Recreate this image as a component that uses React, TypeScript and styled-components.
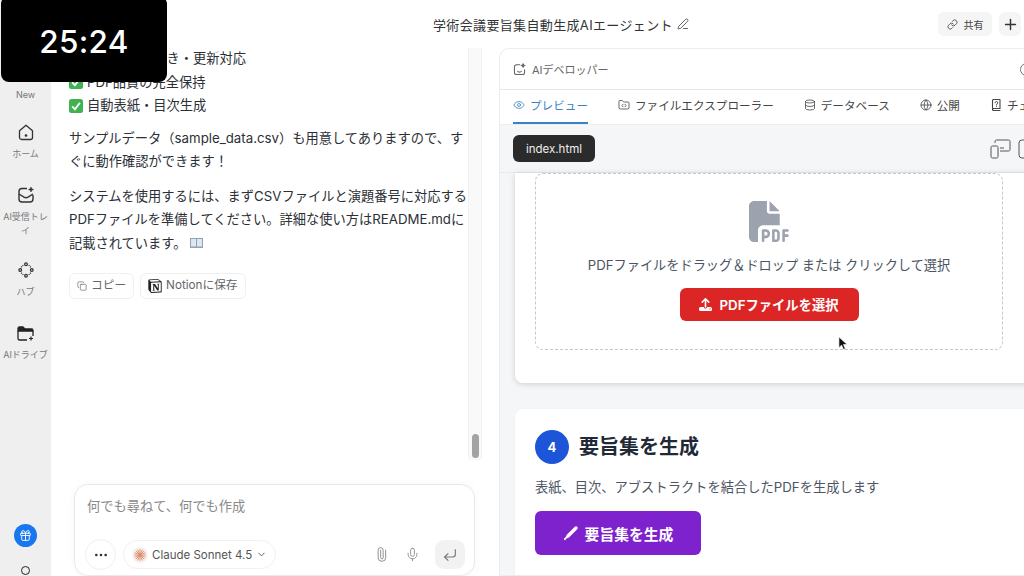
import React from 'react';
import styled, { createGlobalStyle } from 'styled-components';
import {
  ChevronDown,
  Copy,
  CornerDownLeft,
  Database,
  Ellipsis,
  Eye,
  FolderCode,
  Gift,
  Globe,
  Link,
  Mic,
  Paperclip,
  PenLine,
  Plus,
} from 'lucide-react';
import { FaFilePdf, FaUpload } from 'react-icons/fa6';
import { SiNotion } from 'react-icons/si';

const GlobalStyle = createGlobalStyle`
  html, body {
    margin: 0;
    padding: 0;
    background: #fff;
    overflow: hidden;
  }
  * {
    box-sizing: border-box;
  }
  body {
    font-family: Inter, "Noto Sans CJK JP", sans-serif;
    color: #2b2f36;
  }
`;

const HomeIcon = () => (
  <svg width="16" height="17" viewBox="0 0 16 17" fill="none" stroke="#333" strokeWidth="1.3" strokeLinejoin="round">
    <path d="M1.500 6.800 8 1.200l6.500 5.600v6.700a2 2 0 0 1-2 2h-9a2 2 0 0 1-2-2z" />
    <circle cx="8" cy="11.500" r="0.700" fill="#333" />
  </svg>
);

const InboxIcon = () => (
  <svg width="18" height="18" viewBox="0 0 18 18" fill="none" stroke="#333" strokeWidth="1.4" strokeLinejoin="round">
    <path d="M10 2.500H5a3 3 0 0 0-3 3V13a3 3 0 0 0 3 3h8a3 3 0 0 0 3-3V9" />
    <path d="M2 8l5 3.200a4 4 0 0 0 4 0L16 8" />
    <path d="M14 1l.7 1.800 1.800.7-1.800.7L14 6l-.7-1.800-1.800-.7 1.800-.7z" fill="#333" strokeWidth="0.600" />
  </svg>
);

const HubIcon = () => (
  <svg width="18" height="18" viewBox="-1 -1 20 20" fill="none" stroke="#333" strokeWidth="1.400">
    <circle cx="9" cy="2.600" r="1.500" />
    <circle cx="15.400" cy="9" r="1.500" />
    <circle cx="9" cy="15.400" r="1.500" />
    <circle cx="2.600" cy="9" r="1.500" />
    <path d="M12 3.600 14.400 6M14.400 12 12 14.400M6 14.400 3.600 12M3.600 6 6 3.600" strokeDasharray="1.200 1" />
  </svg>
);

const DriveIcon = () => (
  <svg width="17" height="16" viewBox="0 0 17 16" fill="none" stroke="#222" strokeWidth="1.300" strokeLinejoin="round">
    <path d="M1 4V2.500A1.500 1.500 0 0 1 2.500 1H6l2 2h6.500A1.500 1.500 0 0 1 16 4.500V5H1z" fill="#222" />
    <path d="M1 5v7.500A1.500 1.500 0 0 0 2.500 14H10M16 5v5" />
    <path d="M14 10.500v4M12 12.500h4" strokeWidth="1.200" />
  </svg>
);

const SparkleBoxIcon = () => (
  <svg width="13" height="13" viewBox="0 0 18 18" fill="none" stroke="#666" strokeWidth="1.500" strokeLinejoin="round">
    <path d="M10 2.500H5a3 3 0 0 0-3 3V13a3 3 0 0 0 3 3h8a3 3 0 0 0 3-3V9" />
    <path d="M6 11c.8 1.200 1.800 1.600 3 1.600s2.200-.4 3-1.600" />
    <path d="M14 1l.7 1.800 1.800.7-1.800.7L14 6l-.7-1.800-1.800-.7 1.800-.7z" />
  </svg>
);

const QuizIcon = () => (
  <svg width="12" height="12" viewBox="0 0 12 12" fill="none" stroke="#444" strokeWidth="1.100" strokeLinecap="round">
    <path d="M2.500 9.500V1.500a1 1 0 0 1 1-1h6a.5.5 0 0 1 .5.5v8.500h-6.500a1 1 0 0 0 0 2H10" />
    <path d="M5 3.800a1.400 1.400 0 1 1 1.500 1.500v.8M6.500 7.400v.1" strokeWidth="0.900" />
  </svg>
);

const DevicesIcon = () => (
  <svg width="21" height="20" viewBox="0 0 21 20" fill="none" stroke="#555" strokeWidth="1">
    <rect x="1" y="7" width="7" height="12" rx="1.500" />
    <path d="M5 4V2.500A1.500 1.500 0 0 1 6.500 1h12A1.500 1.500 0 0 1 20 2.500v8a1.500 1.500 0 0 1-1.500 1.500H10M10 9h4" />
  </svg>
);

const TabletIcon = () => (
  <svg width="16" height="20" viewBox="0 0 16 20" fill="none" stroke="#555" strokeWidth="1">
    <rect x="1" y="1" width="14" height="18" rx="3" />
  </svg>
);

const ClaudeMark = () => (
  <svg width="16" height="16" viewBox="0 0 16 16" stroke="#dc8a6b" strokeWidth="0.900" strokeLinecap="round">
    <circle cx="8" cy="8" r="8" fill="#f8f0ec" stroke="none" />
    <path d="M8 2.500v11M2.500 8h11M4.100 4.100l7.800 7.800M11.900 4.100l-7.800 7.800M5.800 3l4.400 10M10.200 3 5.800 13M3 5.800l10 4.400M13 5.800 3 10.200" />
  </svg>
);

const StickPen = () => (
  <svg width="16" height="16" viewBox="0 0 16 16" fill="none" stroke="#fff" strokeLinecap="round">
    <path d="M5 11 13 3" strokeWidth="3.400" />
    <path d="M1.800 14.200 4 12" strokeWidth="1.800" />
  </svg>
);

const CheckEmoji = () => (
  <CheckBox viewBox="0 0 14 14">
    <rect width="14" height="14" rx="2.500" fill="#3fb34f" />
    <path d="M3.200 7.400 5.900 10.300 10.900 3.700" fill="none" stroke="#fff" strokeWidth="1.900" />
  </CheckBox>
);

const BookEmoji = () => (
  <svg width="13" height="10" viewBox="0 0 13 10">
    <rect width="13" height="10" fill="#8ea3b8" />
    <rect x="1" y="1" width="5" height="7.500" fill="#dfe6ec" />
    <rect x="7" y="1" width="5" height="7.500" fill="#dfe6ec" />
  </svg>
);

const SideItem: React.FC<{ icon: React.ReactNode; label: React.ReactNode; gap?: number }> = ({ icon, label, gap }) => (
  <SideEntry $gap={gap}>
    {icon}
    <SideLabel>{label}</SideLabel>
  </SideEntry>
);

const Tab: React.FC<{ icon: React.ReactNode; label: string; active?: boolean }> = ({ icon, label, active }) => (
  <TabItem $active={active}>
    {icon}
    {label}
  </TabItem>
);

export default function App() {
  return (
    <Root>
      <GlobalStyle />
      <Sidebar>
        <SideItem icon={<Plus size={18} color="#333" />} label="New" />
        <SideItem icon={<HomeIcon />} label="ホーム" gap={22} />
        <SideItem icon={<InboxIcon />} label="AI受信トレイ" gap={25} />
        <SideItem icon={<HubIcon />} label="ハブ" gap={23} />
        <SideItem icon={<DriveIcon />} label="AIドライブ" gap={27} />
        <SideFoot>
          <GiftBadge>
            <Gift size={13} color="#fff" strokeWidth={1.700} />
          </GiftBadge>
          <FootDot />
        </SideFoot>
      </Sidebar>
      <Main>
        <Header>
          <Title>
            学術会議要旨集自動生成AIエージェント
            <PenLine size={12} strokeWidth={1.500} />
          </Title>
          <HeaderActions>
            <ShareButton>
              <Link size={11} strokeWidth={1.800} />
              共有
            </ShareButton>
            <PlusButton>
              <Plus size={17} strokeWidth={2} />
            </PlusButton>
          </HeaderActions>
        </Header>
        <Body>
          <ChatColumn>
            <ChatTop>
              <Messages>
                <ListLine>
                  <CheckEmoji />
                  ファイル上書き・更新対応
                </ListLine>
                <ListLine>
                  <CheckEmoji />
                  PDF品質の完全保持
                </ListLine>
                <ListLine>
                  <CheckEmoji />
                  自動表紙・目次生成
                </ListLine>
                <Paragraph>
                  サンプルデータ（sample_data.csv）も用意してありますので、す
                  <br />
                  ぐに動作確認ができます！
                </Paragraph>
                <Paragraph>
                  システムを使用するには、まずCSVファイルと演題番号に対応する
                  <br />
                  PDFファイルを準備してください。詳細な使い方はREADME.mdに
                  <br />
                  記載されています。 <BookEmoji />
                </Paragraph>
                <MessageActions>
                  <GhostButton>
                    <Copy size={10} strokeWidth={1.600} />
                    コピー
                  </GhostButton>
                  <GhostButton>
                    <SiNotion size={14} color="#222" />
                    Notionに保存
                  </GhostButton>
                </MessageActions>
              </Messages>
              <ScrollTrack>
                <ScrollThumb />
              </ScrollTrack>
            </ChatTop>
            <Composer>
              <Placeholder>何でも尋ねて、何でも作成</Placeholder>
              <ComposerRow>
                <MoreButton>
                  <Ellipsis size={16} color="#333" />
                </MoreButton>
                <ModelPicker>
                  <ClaudeMark />
                  Claude Sonnet 4.5
                  <ChevronDown size={11} />
                </ModelPicker>
                <ComposerTools>
                  <ClipIcon size={15} strokeWidth={1.400} />
                  <Mic size={15} strokeWidth={1.400} />
                  <SendButton>
                    <CornerDownLeft size={16} strokeWidth={1.700} />
                  </SendButton>
                </ComposerTools>
              </ComposerRow>
            </Composer>
          </ChatColumn>
          <Panel>
            <PanelHead>
              <SparkleBoxIcon />
              AIデベロッパー
              <PanelRing />
            </PanelHead>
            <Tabs>
              <Tab icon={<Eye size={12} strokeWidth={1.600} />} label="プレビュー" active />
              <Tab icon={<FolderCode size={12} strokeWidth={1.600} />} label="ファイルエクスプローラー" />
              <Tab icon={<Database size={12} strokeWidth={1.600} />} label="データベース" />
              <Tab icon={<Globe size={12} strokeWidth={1.600} />} label="公開" />
              <Tab icon={<QuizIcon />} label="チェック" />
            </Tabs>
            <Toolbar>
              <FilePill>index.html</FilePill>
              <DevicesIcon />
              <TabletIcon />
            </Toolbar>
            <Preview>
              <UploadCard>
                <DropZone>
                  <FaFilePdf size={41} color="#9ca3af" />
                  <DropText>PDFファイルをドラッグ＆ドロップ または クリックして選択</DropText>
                  <SelectButton>
                    <FaUpload size={13} />
                    PDFファイルを選択
                  </SelectButton>
                </DropZone>
              </UploadCard>
              <StepCard>
                <StepHead>
                  <StepNumber>4</StepNumber>
                  <StepTitle>要旨集を生成</StepTitle>
                </StepHead>
                <StepText>表紙、目次、アブストラクトを結合したPDFを生成します</StepText>
                <GenerateButton>
                  <StickPen />
                  要旨集を生成
                </GenerateButton>
              </StepCard>
            </Preview>
          </Panel>
        </Body>
      </Main>
      <Timer>25:24</Timer>
      <Pointer viewBox="0 0 12 16" width="11" height="15">
        <path d="M1 1v11.500l3-2.700 2 4.700 2-.9-2-4.500h4z" fill="#111" stroke="#fff" strokeWidth="0.700" />
      </Pointer>
    </Root>
  );
}

const Root = styled.div`
  position: relative;
  display: flex;
  width: 1024px;
  height: 576px;
  overflow: hidden;
`;

const Timer = styled.div`
  position: absolute;
  top: -4px;
  left: 1px;
  display: flex;
  align-items: center;
  justify-content: center;
  width: 166px;
  height: 86px;
  padding-top: 4px;
  background: #000;
  border-radius: 8px;
  color: #fff;
  font-size: 31.500px;
  font-weight: 500;
  letter-spacing: 0.300px;
`;

const Pointer = styled.svg`
  position: absolute;
  top: 336px;
  left: 838px;
`;

const Sidebar = styled.nav`
  display: flex;
  flex: 0 0 51px;
  flex-direction: column;
  align-items: center;
  padding-top: 64px;
  background: #efefef;
`;

const SideEntry = styled.div<{ $gap?: number }>`
  display: flex;
  flex-direction: column;
  align-items: center;
  gap: 6px;
  width: 100%;
  margin-top: ${props => props.$gap ?? 0}px;
`;

const SideLabel = styled.span`
  color: #777;
  font-size: 9px;
  line-height: 14px;
  text-align: center;
  padding: 0 2px;
`;

const SideFoot = styled.div`
  display: flex;
  flex-direction: column;
  align-items: center;
  gap: 19px;
  height: 52px;
  margin-top: auto;
`;

const GiftBadge = styled.div`
  display: flex;
  flex: 0 0 23px;
  align-items: center;
  justify-content: center;
  width: 23px;
  height: 23px;
  margin-left: -1px;
  background: #1677ee;
  border-radius: 50%;
`;

const FootDot = styled.div`
  flex: 0 0 9px;
  width: 9px;
  height: 9px;
  margin-left: -1px;
  border: 1.500px solid #222;
  border-radius: 50%;
`;

const Main = styled.div`
  display: flex;
  flex: 1;
  flex-direction: column;
  min-width: 0;
`;

const Header = styled.header`
  display: flex;
  flex: 0 0 48px;
  align-items: center;
  justify-content: space-between;
  padding: 0 3px 0 382px;
`;

const Title = styled.div`
  display: flex;
  align-items: center;
  gap: 4px;
  color: #333;
  font-size: 13px;
  letter-spacing: 0.350px;
`;

const HeaderActions = styled.div`
  display: flex;
  align-items: center;
  gap: 7px;
`;

const ShareButton = styled.div`
  display: flex;
  align-items: center;
  justify-content: center;
  gap: 6px;
  width: 54px;
  height: 24px;
  background: #f5f5f5;
  border-radius: 6px;
  color: #444;
  font-size: 10px;
`;

const PlusButton = styled.div`
  display: flex;
  align-items: center;
  justify-content: center;
  width: 22px;
  height: 24px;
  background: #f5f5f5;
  border-radius: 6px;
  color: #333;
`;

const Body = styled.div`
  display: flex;
  flex: 1;
  min-height: 0;
`;

const ChatColumn = styled.section`
  display: flex;
  flex: 0 0 431px;
  flex-direction: column;
`;

const ChatTop = styled.div`
  display: flex;
  flex: 0 0 412px;
`;

const Messages = styled.div`
  flex: 1;
  margin-top: -1px;
  padding-left: 18px;
  color: #2b2f36;
  font-size: 13.250px;
  line-height: 23.500px;
  white-space: nowrap;
`;

const ListLine = styled.div`
  display: flex;
  align-items: center;
  gap: 4px;
`;

const CheckBox = styled.svg`
  width: 14px;
  height: 14px;
`;

const Paragraph = styled.p`
  margin: 9px 0 0;
  &:nth-of-type(n + 2) {
    margin-top: 11px;
  }
`;

const MessageActions = styled.div`
  display: flex;
  gap: 6px;
  margin-top: 18px;
`;

const GhostButton = styled.div`
  display: flex;
  align-items: center;
  gap: 4px;
  height: 26px;
  padding: 0 7px;
  background: #fff;
  border: 1px solid #f0f0f0;
  border-radius: 6px;
  color: #666;
  font-size: 11.700px;
`;

const ScrollTrack = styled.div`
  display: flex;
  flex: 0 0 14px;
  align-items: flex-end;
  justify-content: center;
  padding-bottom: 2px;
  background: #f9f9f9;
  border-left: 1px solid #f1f1f1;
  border-right: 1px solid #f1f1f1;
  border-radius: 0 0 4px 4px;
`;

const ScrollThumb = styled.div`
  width: 7px;
  height: 24px;
  background: #a3a3a3;
  border-radius: 4px;
`;

const Composer = styled.div`
  width: 401px;
  height: 110px;
  margin: 24px 0 0 23px;
  padding: 13px 9px 0 10px;
  background: #fff;
  border: 1px solid #e9e9e9;
  border-radius: 14px;
  box-shadow: 0 0 8px rgba(0, 0, 0, 0.04);
`;

const Placeholder = styled.div`
  height: 41px;
  padding-left: 2px;
  color: #8a8a8a;
  font-size: 13.250px;
  line-height: 17px;
`;

const ComposerRow = styled.div`
  display: flex;
  align-items: center;
  gap: 7px;
`;

const MoreButton = styled.div`
  display: flex;
  align-items: center;
  justify-content: center;
  width: 31px;
  height: 31px;
  border: 1px solid #efefef;
  border-radius: 50%;
`;

const ModelPicker = styled.div`
  display: flex;
  align-items: center;
  gap: 4px;
  height: 29px;
  padding: 0 8px;
  border: 1px solid #f1f1f1;
  border-radius: 15px;
  color: #555;
  font-size: 11.500px;
`;

const ComposerTools = styled.div`
  display: flex;
  align-items: center;
  gap: 16px;
  margin-left: auto;
  color: #888;
`;

const ClipIcon = styled(Paperclip)`
  transform: rotate(-45deg);
`;

const SendButton = styled.div`
  display: flex;
  align-items: center;
  justify-content: center;
  width: 30px;
  height: 29px;
  margin-left: -1px;
  background: #f2f2f2;
  border-radius: 9px;
  color: #777;
`;

const Panel = styled.section`
  display: flex;
  flex: 0 0 560px;
  flex-direction: column;
  margin-left: 17px;
  background: #fff;
  border: 1px solid #ececec;
  border-radius: 10px 10px 0 0;
  overflow: hidden;
`;

const PanelHead = styled.div`
  display: flex;
  flex: 0 0 41px;
  align-items: center;
  gap: 6px;
  padding-left: 13px;
  border-bottom: 1px solid #e7e7e7;
  color: #666;
  font-size: 11px;
`;

const PanelRing = styled.span`
  width: 13px;
  height: 13px;
  margin-left: 405px;
  border: 1px solid #777;
  border-radius: 50%;
`;

const Tabs = styled.div`
  display: flex;
  flex: 0 0 34px;
  gap: 30px;
  padding-left: 13px;
`;

const TabItem = styled.div<{ $active?: boolean }>`
  display: flex;
  align-items: center;
  gap: 5px;
  padding-bottom: 2px;
  border-bottom: 2px solid ${props => (props.$active ? '#3b82c4' : 'transparent')};
  color: ${props => (props.$active ? '#3b82c4' : '#444')};
  font-size: 11.600px;
  white-space: nowrap;
`;

const Toolbar = styled.div`
  display: flex;
  flex: 0 0 49px;
  align-items: center;
  gap: 7px;
  padding-left: 13px;
  background: #f5f6f8;
  border-top: 1px solid #eceef1;
  border-bottom: 1px solid #e8eaee;
`;

const FilePill = styled.div`
  display: flex;
  align-items: center;
  justify-content: center;
  width: 82px;
  height: 27px;
  margin-right: 388px;
  background: #2b2b2b;
  border-radius: 6px;
  color: #eee;
  font-size: 11.500px;
`;

const Preview = styled.div`
  flex: 1;
  padding-left: 15px;
  background: #f5f6f8;
`;

const Card = styled.div`
  width: 530px;
  background: #fff;
  box-shadow: 0 1px 6px rgba(0, 0, 0, 0.16);
`;

const UploadCard = styled(Card)`
  height: 210px;
  padding-left: 20px;
  border-radius: 0 0 8px 8px;
`;

const DropZone = styled.div`
  display: flex;
  flex-direction: column;
  align-items: center;
  width: 468px;
  height: 177px;
  padding-top: 27px;
  border: 1px dashed #c3c7ce;
  border-radius: 8px;
`;

const DropText = styled.div`
  margin-top: 14px;
  color: #4b5563;
  font-size: 13.200px;
  line-height: 19px;
  white-space: nowrap;
`;

const SelectButton = styled.div`
  display: flex;
  align-items: center;
  justify-content: center;
  gap: 7px;
  width: 179px;
  height: 33px;
  margin-top: 13px;
  background: #dc2626;
  border-radius: 6px;
  color: #fff;
  font-size: 13.300px;
  font-weight: 600;
`;

const StepCard = styled(Card)`
  height: 200px;
  margin-top: 26px;
  padding: 21px 20px 0;
  border-radius: 8px;
  box-shadow: 0 0 3px rgba(0, 0, 0, 0.03);
`;

const StepHead = styled.div`
  display: flex;
  align-items: center;
  gap: 10px;
`;

const StepNumber = styled.div`
  display: flex;
  align-items: center;
  justify-content: center;
  width: 34px;
  height: 34px;
  background: #1d55d8;
  border-radius: 50%;
  color: #fff;
  font-size: 13px;
  font-weight: 700;
`;

const StepTitle = styled.h2`
  margin: 0;
  color: #1f2937;
  font-size: 20px;
  font-weight: 700;
  line-height: 30px;
`;

const StepText = styled.p`
  margin: 14px 0 0;
  color: #4b5563;
  font-size: 13.270px;
  line-height: 18px;
`;

const GenerateButton = styled.div`
  display: flex;
  align-items: center;
  justify-content: center;
  gap: 6px;
  width: 166px;
  height: 44px;
  margin-top: 15px;
  background: #7e22ce;
  border-radius: 6px;
  color: #fff;
  font-size: 14.800px;
  font-weight: 600;
`;
